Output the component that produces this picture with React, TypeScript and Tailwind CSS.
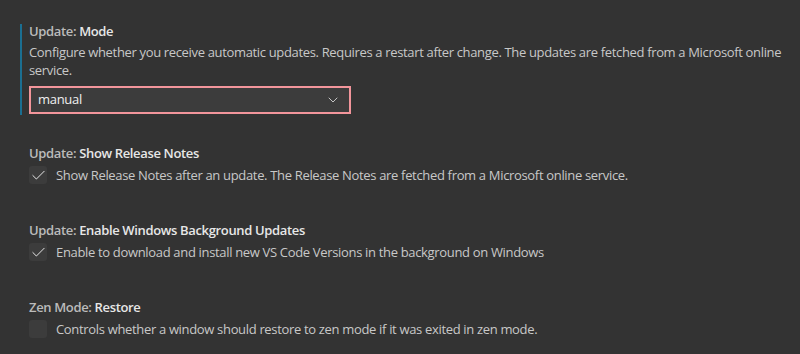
import { ChevronDown, Check } from "lucide-react";

const font = { fontFamily: '"Open Sans", "Noto Sans", sans-serif' };

function Title({ cat, name }: { cat: string; name: string }) {
    return (
        <div className="text-[13px] leading-[18px] font-semibold tracking-[-0.35px]">
            <span className="text-[#bbbbbb]">{cat}: </span>
            <span className="text-[#e7e7e7]">{name}</span>
        </div>
    );
}

function CheckRow({ checked, text }: { checked: boolean; text: string }) {
    return (
        <div className="flex items-center mt-[4px]">
            <div className="w-[18px] h-[18px] rounded-[3px] bg-[#3c3c3c] flex items-center justify-center text-[#e8e8e8]">
                {checked && <Check size={17} strokeWidth={1.4} />}
            </div>
            <span className="ml-[9px] text-[13px] leading-[18px] tracking-[-0.33px] text-[#c8c8c8] whitespace-nowrap">{text}</span>
        </div>
    );
}

export default function App() {
    return (
        <div className="w-[800px] h-[354px] bg-[#333333] overflow-hidden pt-[24px] pl-[20px]" style={font}>
            <div className="border-l-2 border-[#1b6f92] pl-[7px] pb-[1px]">
                <div className="text-[13px] leading-[14px] font-semibold tracking-[-0.35px]">
                    <span className="text-[#bbbbbb]">Update: </span>
                    <span className="text-[#e7e7e7]">Mode</span>
                </div>
                <p className="mt-[5px] text-[13px] leading-[18px] tracking-[-0.34px] text-[#c8c8c8] whitespace-nowrap">
                    Configure whether you receive automatic updates. Requires a restart after change. The updates are fetched from a Microsoft online
                    <br />
                    service.
                </p>
                <div className="mt-[7px] w-[322px] h-[28px] border-2 border-[#f2959b] bg-[#3c3c3c] flex items-center justify-between pl-[7px] pr-[8px]">
                    <span className="text-[13px] tracking-[-0.3px] text-[#f0f0f0]">manual</span>
                    <ChevronDown size={16} strokeWidth={1.5} className="text-[#c5c5c5]" />
                </div>
            </div>

            <div className="pl-[9px] mt-[29px]">
                <Title cat="Update" name="Show Release Notes" />
                <CheckRow checked text="Show Release Notes after an update. The Release Notes are fetched from a Microsoft online service." />
            </div>

            <div className="pl-[9px] mt-[37px]">
                <Title cat="Update" name="Enable Windows Background Updates" />
                <CheckRow checked text="Enable to download and install new VS Code Versions in the background on Windows" />
            </div>

            <div className="pl-[9px] mt-[37px]">
                <Title cat="Zen Mode" name="Restore" />
                <CheckRow checked={false} text="Controls whether a window should restore to zen mode if it was exited in zen mode." />
            </div>
        </div>
    );
}
